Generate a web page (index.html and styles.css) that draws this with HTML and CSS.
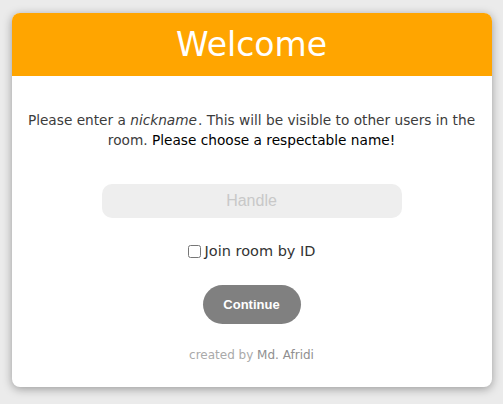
FILE: index.html
```html
<!DOCTYPE html>
<html>
<head>
<meta charset="utf-8">
<link rel="stylesheet" href="styles.css">
</head>
<body>
<div class="card">
  <header class="card-head"><h1 class="title">Welcome</h1></header>
  <main class="card-body">
    <p class="intro">Please enter a <i>nickname</i>. This will be visible to other users in the<br>room. <span class="strong">Please choose a respectable name!</span></p>
    <input class="handle" type="text" placeholder="Handle">
    <label class="join"><input type="checkbox" class="join-box">Join room by ID</label>
    <button class="continue" type="button">Continue</button>
    <p class="credit">created by <span class="author">Md. Afridi</span></p>
  </main>
</div>
</body>
</html>
```
FILE: styles.css
```css
html,body{margin:0;padding:0}
body{background:#ebebeb;font-family:"DejaVu Sans",sans-serif;height:404px;padding-top:13px;box-sizing:border-box}
.card{width:480px;margin:0 auto;background:#fff;border-radius:8px;box-shadow:0 2px 10px rgba(0,0,0,.35);overflow:hidden}
.card-head{background:#ffa500;height:63px;display:flex;align-items:center;justify-content:center}
.title{margin:0;color:#fff;font-weight:400;font-size:33px;line-height:1}
.card-body{display:flex;flex-direction:column;align-items:center;padding:34px 10px 24px}
.intro{margin:0;font-size:13.7px;line-height:20px;color:#3c3c3c;text-align:center;font-weight:400}
.intro i{font-style:italic;font-weight:400;padding-right:1px}
.strong{color:#000}
.handle{margin-top:34px;width:300px;height:34px;box-sizing:border-box;border:0;border-radius:10px;background:#eee;text-align:center;font-family:"Liberation Sans",Arial,sans-serif;font-size:16px;outline:none;padding:0}
.handle::placeholder{color:#c8c8c8}
.join{margin-top:23px;display:flex;align-items:center;font-size:14.5px;color:#333;line-height:20px}
.join-box{margin:0 4px 0 0;width:13px;height:13px}
.continue{margin-top:24px;width:98px;height:39px;border:0;border-radius:20px;background:#808080;color:#fff;font-family:"Liberation Sans",Arial,sans-serif;font-weight:700;font-size:13px}
.credit{margin:23px 0 0;font-size:12px;color:#aaa;line-height:16px}
.author{color:#8f8f8f}
```
